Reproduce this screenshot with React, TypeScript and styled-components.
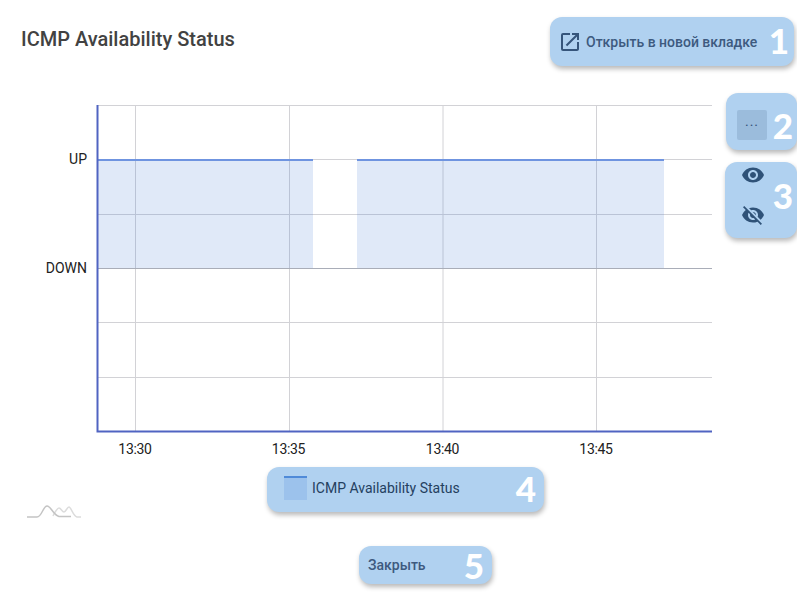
import React from "react";
import styled, { createGlobalStyle } from "styled-components";
import { MdOpenInNew, MdVisibility, MdVisibilityOff } from "react-icons/md";

const GlobalStyle = createGlobalStyle`
  html, body {
    margin: 0;
    padding: 0;
    background: #fff;
    overflow: hidden;
  }
  body {
    font-family: Roboto, "Liberation Sans", sans-serif;
  }
`;

const Page = styled.div`
  width: 797px;
  height: 599px;
  display: flex;
  flex-direction: column;
  overflow: hidden;
`;

const Header = styled.header`
  height: 93px;
  box-sizing: border-box;
  padding: 17px 3px 0 21px;
  display: flex;
  justify-content: space-between;
  align-items: flex-start;
`;

const Title = styled.h1`
  margin: 9px 0 0;
  font-size: 20px;
  line-height: 26px;
  font-weight: 500;
  color: #424242;
`;

const Callout = styled.div`
  background: #b0d1f0;
  border-radius: 12px;
  box-shadow: 1px 3px 5px rgba(0, 0, 0, 0.28);
  display: flex;
  align-items: center;
  box-sizing: border-box;
`;

const Number = styled.span`
  font-family: Lato, "Open Sans", sans-serif;
  font-weight: 900;
  font-size: 35px;
  line-height: 40px;
  color: #fff;
`;

const OpenButton = styled(Callout)`
  width: 244px;
  height: 49px;
  padding: 0 5px 0 8px;
  color: #36557b;
  svg {
    flex: none;
  }
`;

const ButtonText = styled.span`
  font-size: 14px;
  font-weight: 500;
  margin-left: 4px;
  flex: 1;
  color: #3d5a7f;
`;

const OpenNumber = styled(Number)`
  margin-top: -4px;
`;

const ChartRow = styled.section`
  height: 374px;
  display: flex;
`;

const ChartSvg = styled.svg`
  width: 725px;
  height: 374px;
  flex: none;
  display: block;
`;

const AxisLabel = styled.text`
  font-family: Roboto, sans-serif;
  font-size: 14px;
  fill: #212121;
`;

const TickLabel = styled(AxisLabel)`
  letter-spacing: -0.3px;
`;

const Side = styled.aside`
  width: 72px;
  display: flex;
  flex-direction: column;
  gap: 12px;
`;

const MenuCallout = styled(Callout)`
  margin-left: 1px;
  height: 57px;
  padding: 7px 4px 0 11px;
  justify-content: space-between;
`;

const MenuButton = styled.div`
  width: 30px;
  height: 30px;
  background: #9bbcdc;
  border-radius: 2px;
  color: #34527a;
  font-size: 14px;
  letter-spacing: 1px;
  line-height: 22px;
  text-align: center;
`;

const EyeCallout = styled(Callout)`
  height: 76px;
  padding: 0 4px 10px 16px;
  justify-content: space-between;
`;

const EyeColumn = styled.div`
  display: flex;
  flex-direction: column;
  gap: 16px;
  color: #2f5278;
  svg {
    display: block;
  }
`;

const LegendRow = styled.section`
  height: 45px;
  padding-left: 27px;
  display: flex;
  align-items: flex-start;
`;

const Logo = styled.svg`
  width: 54px;
  height: 14px;
  margin: 37px 186px 0 0;
  flex: none;
  overflow: visible;
`;

const LegendCallout = styled(Callout)`
  width: 277px;
  height: 45px;
  padding: 0 8px 3px 17px;
`;

const Swatch = styled.span`
  width: 23px;
  height: 24px;
  box-sizing: border-box;
  background: #9cc2ec;
  border-top: 2px solid #4f8ad8;
  flex: none;
`;

const LegendText = styled.span`
  font-size: 14px;
  color: #24405f;
  margin-left: 5px;
  flex: 1;
`;

const CloseRow = styled.footer`
  margin-top: 34px;
  padding-left: 359px;
`;

const CloseCallout = styled(Callout)`
  width: 133px;
  height: 38px;
  padding: 0 8px 0 9px;
  justify-content: space-between;
`;

const CloseText = styled.span`
  font-size: 14px;
  font-weight: 500;
  color: #3d5a7f;
`;

const gridY = [12.5, 66.5, 121.5, 175.5, 229.5, 284.5];
const gridX = [135.5, 289.5, 443, 596.5];
const ticks = [
  { x: 135, label: "13:30" },
  { x: 288.5, label: "13:35" },
  { x: 442.5, label: "13:40" },
  { x: 596, label: "13:45" },
];
const segments = [
  { from: 98, to: 313 },
  { from: 357, to: 664 },
];

const Chart = () => (
  <ChartSvg viewBox="0 0 725 374">
    {gridY.map((y) => (
      <line key={y} x1={98} x2={712} y1={y} y2={y} stroke="#d2d2d6" />
    ))}
    {gridX.map((x) => (
      <line key={x} x1={x} x2={x} y1={12} y2={338} stroke="#d2d2d6" />
    ))}
    {segments.map((s) => (
      <g key={s.from}>
        <rect x={s.from} y={67} width={s.to - s.from} height={108} fill="#4a7bd4" fillOpacity={0.17} />
        <line x1={s.from} x2={s.to} y1={67} y2={67} stroke="#6f94e0" strokeWidth={2} />
      </g>
    ))}
    <line x1={98} x2={712} y1={175.5} y2={175.5} stroke="#a9adb8" />
    <path d="M97.5 12V338.5H712" fill="none" stroke="#5064c2" strokeWidth={2} />
    <AxisLabel x={87} y={71} textAnchor="end">UP</AxisLabel>
    <AxisLabel x={87} y={180} textAnchor="end">DOWN</AxisLabel>
    {ticks.map((t) => (
      <TickLabel key={t.label} x={t.x} y={361} textAnchor="middle">
        {t.label}
      </TickLabel>
    ))}
  </ChartSvg>
);

export default function App() {
  return (
    <Page>
      <GlobalStyle />
      <Header>
        <Title>ICMP Availability Status</Title>
        <OpenButton>
          <MdOpenInNew size={24} />
          <ButtonText>Открыть в новой вкладке</ButtonText>
          <OpenNumber>1</OpenNumber>
        </OpenButton>
      </Header>
      <ChartRow>
        <Chart />
        <Side>
          <MenuCallout>
            <MenuButton>...</MenuButton>
            <Number>2</Number>
          </MenuCallout>
          <EyeCallout>
            <EyeColumn>
              <MdVisibility size={24} />
              <MdVisibilityOff size={24} />
            </EyeColumn>
            <Number>3</Number>
          </EyeCallout>
        </Side>
      </ChartRow>
      <LegendRow>
        <Logo viewBox="0 0 54 14">
          <path d="M26 12C28 8 30 4 32 4C34 4 35 8 37 8C39 8 40 3 42 3C44 3 46 12 50 13H54" fill="none" stroke="#dcdcdc" strokeWidth={1.5} />
          <path d="M0 13H10C15 13 16 2 20 2C24 2 26 11 32 12.5H44" fill="none" stroke="#c4c4c4" strokeWidth={1.5} />
        </Logo>
        <LegendCallout>
          <Swatch />
          <LegendText>ICMP Availability Status</LegendText>
          <Number>4</Number>
        </LegendCallout>
      </LegendRow>
      <CloseRow>
        <CloseCallout>
          <CloseText>Закрыть</CloseText>
          <Number>5</Number>
        </CloseCallout>
      </CloseRow>
    </Page>
  );
}
